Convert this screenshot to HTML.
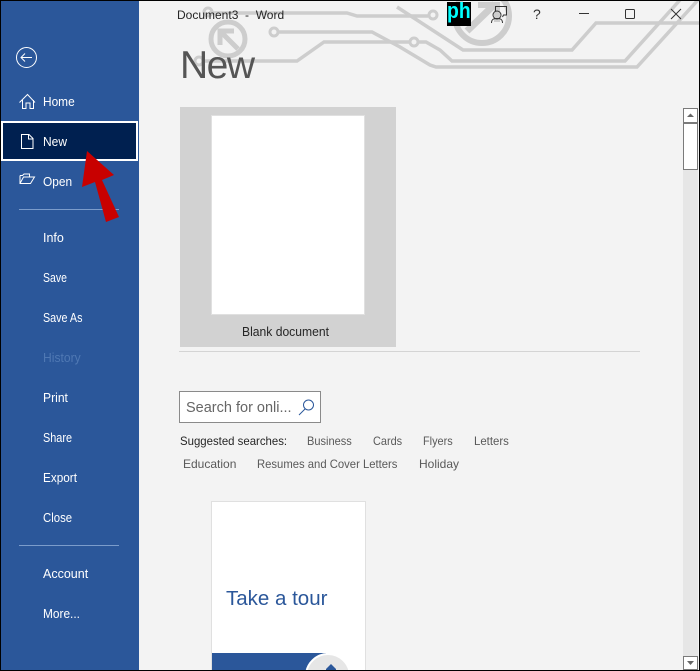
<!DOCTYPE html>
<html><head><meta charset="utf-8">
<style>
html,body{margin:0;padding:0;background:#000}
#p{position:relative;width:700px;height:671px;overflow:hidden;background:#f3f3f3;font-family:"Liberation Sans",sans-serif}
#p *{box-sizing:border-box}
.a{position:absolute}
.t{position:absolute;white-space:nowrap;line-height:16px;font-size:12.5px;transform-origin:0 50%}
.w{color:#fff}
.g{color:#595959}
svg{position:absolute;overflow:visible}
</style></head>
<body><div id="p">
<!-- circuit background -->
<svg class="a" style="left:0;top:0" width="700" height="120" fill="none" stroke="#cdcdcd" stroke-width="3.500">
<path d="M209 13H347L357 16H428"/>
<circle cx="433" cy="15" r="4" stroke-width="3"/>
<circle cx="208" cy="12" r="4" stroke-width="3"/>
<path d="M397 7L463 50H572L596 23H700"/>
<circle cx="274" cy="32" r="4" stroke-width="3"/>
<path d="M278 32H372L400 47L430 65L436 67H637L698 0"/>
<circle cx="199" cy="61" r="4" stroke-width="3"/>
<path d="M203 61H297L324 42H409"/>
<circle cx="414" cy="42" r="4" stroke-width="3"/>
<path d="M418 42H426L440 50L452 61H625L680 0"/>
<circle cx="228" cy="39" r="17" stroke-width="5"/>
<path d="M238 49L222 33" stroke-width="5"/><path d="M220 45V31H234" stroke-width="5"/>
<circle cx="482" cy="16" r="27" stroke-width="6"/>
<path d="M467 31L495 4" stroke-width="7"/><path d="M478 5H497V22" stroke-width="6"/>
</svg>
<!-- side panel -->
<div class="a" style="left:1px;top:1px;width:138px;height:669px;background:#2b579a"></div>
<div class="a" style="left:1px;top:121px;width:137px;height:40px;background:#002050;border:2px solid #fff"></div>
<svg style="left:0;top:0" width="140" height="200" fill="none" stroke="#fff" stroke-width="1">
<circle cx="26.500" cy="57.500" r="10"/>
<path d="M21 57.500H32M25 53.500L21 57.500L25 61.500"/>
<path d="M19.500 102.500L27.500 94.500L35 102.500M22.500 100V108.500H26V103H30V108.500H33.500V100"/>
<path d="M21.500 134.500H29L33 138.500V148.500H21.500ZM28.500 134.500V139H33"/>
<path d="M20 175.500V183.500H30.500L34.500 177H23.500L20 183.500M20 175.500H22.500L24 174H29.500V177"/>
</svg>
<div class="a" style="left:19px;top:209px;width:100px;height:1px;background:#7b9ccb"></div>
<div class="a" style="left:19px;top:545px;width:100px;height:1px;background:#7b9ccb"></div>
<span class="t w" style="left:43px;top:94px;transform:scaleX(.95)">Home</span>
<span class="t w" style="left:43px;top:134px;transform:scaleX(.96)">New</span>
<span class="t w" style="left:43px;top:174px;transform:scaleX(.95)">Open</span>
<span class="t w" style="left:43px;top:230px">Info</span>
<span class="t w" style="left:43px;top:270px;transform:scaleX(.84)">Save</span>
<span class="t w" style="left:43px;top:310px;transform:scaleX(.86)">Save As</span>
<span class="t" style="left:43px;top:350px;color:#4f78b3;transform:scaleX(.97)">History</span>
<span class="t w" style="left:43px;top:390px;transform:scaleX(.97)">Print</span>
<span class="t w" style="left:43px;top:430px;transform:scaleX(.87)">Share</span>
<span class="t w" style="left:43px;top:470px;transform:scaleX(.94)">Export</span>
<span class="t w" style="left:43px;top:510px;transform:scaleX(.91)">Close</span>
<span class="t w" style="left:43px;top:566px">Account</span>
<span class="t w" style="left:43px;top:606px;transform:scaleX(.95)">More...</span>
<!-- title -->
<span class="t" style="left:177px;top:7px;color:#262626;font-size:12px;white-space:pre">Document3  -  Word</span>
<div class="a" style="left:447px;top:2px;width:24px;height:24px;background:#000;overflow:hidden"><span class="t" style="left:0;top:-3px;color:#0ff;font-size:22px;line-height:24px;font-weight:bold;transform:scaleX(.88)">ph</span></div>
<svg style="left:0;top:0" width="700" height="40" fill="none" stroke="#333" stroke-width="1">
<path d="M495.500 11V6.500H506.500V15H503.500L502.500 17"/>
<circle cx="497" cy="15" r="4"/>
<path d="M491.500 23C491.500 19 494 18.500 497 18.500C500 18.500 502.500 19 502.500 23"/>
<path d="M579 13.500H589"/>
<rect x="625.500" y="9.500" width="9" height="9" rx="1"/>
<path d="M671 9L681 19M681 9L671 19"/>
</svg>
<span class="t" style="left:533px;top:6px;color:#333;font-size:14px">?</span>
<!-- heading -->
<span class="t" style="left:180px;top:44px;color:#555;font-size:39px;line-height:44px;letter-spacing:-1.500px">New</span>
<!-- blank doc -->
<div class="a" style="left:180px;top:107px;width:216px;height:240px;background:#d2d2d2"></div>
<div class="a" style="left:211px;top:115px;width:154px;height:200px;background:#fff;border:1px solid #e0e0e0"></div>
<span class="t" style="left:242px;top:324px;color:#262626;transform:scaleX(.97)">Blank document</span>
<div class="a" style="left:179px;top:351px;width:461px;height:1px;background:#d4d4d4"></div>
<!-- search -->
<div class="a" style="left:179px;top:391px;width:142px;height:32px;background:#fff;border:1px solid #8a8a8a"></div>
<span class="t" style="left:186px;top:400px;color:#666;font-size:14.500px">Search for onli...</span>
<svg style="left:0;top:0" width="330" height="430" fill="none" stroke="#2b579a" stroke-width="1">
<circle cx="308.500" cy="405" r="5"/><path d="M305 409L299 415"/>
</svg>
<span class="t" style="left:180px;top:433px;color:#262626;font-size:12px;transform:scaleX(.95)">Suggested searches:</span>
<span class="t g" style="left:307px;top:433px;font-size:12px;transform:scaleX(.92)">Business</span>
<span class="t g" style="left:373px;top:433px;font-size:12px;transform:scaleX(.91)">Cards</span>
<span class="t g" style="left:423px;top:433px;font-size:12px;transform:scaleX(.91)">Flyers</span>
<span class="t g" style="left:474px;top:433px;font-size:12px;transform:scaleX(.95)">Letters</span>
<span class="t g" style="left:183px;top:456px;font-size:12px">Education</span>
<span class="t g" style="left:257px;top:456px;font-size:12px;transform:scaleX(.94)">Resumes and Cover Letters</span>
<span class="t g" style="left:419px;top:456px;font-size:12px">Holiday</span>
<!-- tour card -->
<div class="a" style="left:211px;top:501px;width:155px;height:170px;background:#fff;border:1px solid #e0e0e0;border-bottom:0"></div>
<span class="t" style="left:226px;top:586px;color:#2b579a;font-size:20.500px;line-height:26px">Take a tour</span>
<div class="a" style="left:212px;top:653px;width:114px;height:18px;background:#2b579a;overflow:hidden"></div>
<div class="a" style="left:305px;top:653px;width:46px;height:46px;border-radius:50%;background:#e6e6e6;border:2px solid #fff"></div>
<svg style="left:0;top:0" width="340" height="671"><path d="M331 664L326 669V671H336V669Z" fill="#2b579a"/></svg>
<!-- scrollbar -->
<div class="a" style="left:683px;top:108px;width:15px;height:562px;background:#e6e6e6"></div>
<div class="a" style="left:683px;top:108px;width:15px;height:15px;background:#fff;border:1px solid #7a7a7a"></div>
<div class="a" style="left:683px;top:122px;width:15px;height:48px;background:#fff;border:1px solid #7a7a7a;border-top-width:2px"></div>
<div class="a" style="left:683px;top:656px;width:15px;height:14px;background:#fff;border:1px solid #7a7a7a"></div>
<svg style="left:0;top:0" width="700" height="671" fill="#666"><path d="M687 117L690.500 113.500L694 117Z"/><path d="M687 661H694L690.500 665Z"/></svg>
<!-- red arrow -->
<svg style="left:0;top:0" width="140" height="230"><path d="M87 151L114 175L102 180L119 217L106 222L95 182L82 187Z" fill="#c80000"/></svg>
<!-- window border -->
<div class="a" style="left:0;top:0;width:700px;height:671px;border:1px solid #000;pointer-events:none"></div>
</div></body></html>
